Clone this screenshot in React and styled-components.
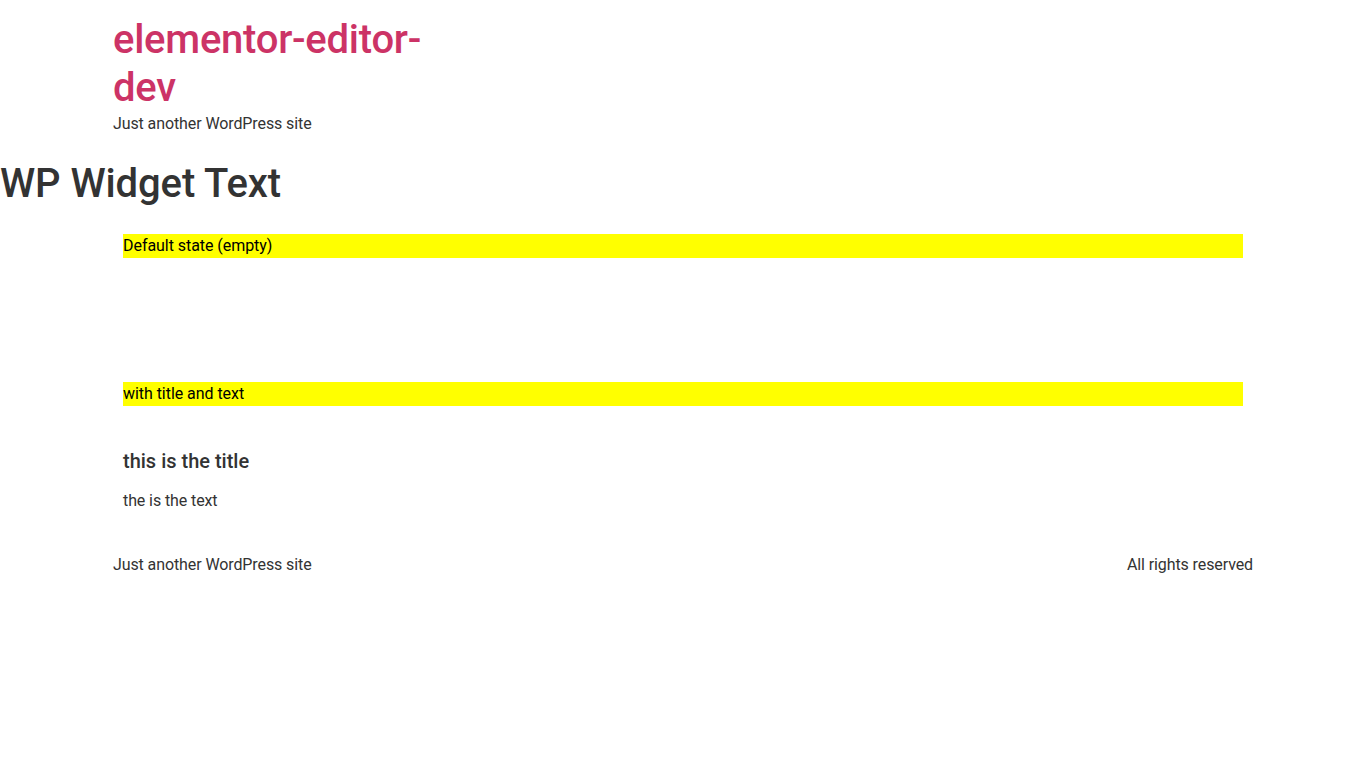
import React from 'react';
import styled, { createGlobalStyle } from 'styled-components';

const GlobalStyle = createGlobalStyle`
    html, body {
        margin: 0;
        padding: 0;
        background: #fff;
    }

    body {
        font-family: Roboto, "Liberation Sans", sans-serif;
        font-size: 16px;
        line-height: 1.5;
        letter-spacing: -0.1px;
        color: #333;
    }
`;

const App = () => {
    return (
        <>
            <GlobalStyle />
            <Header>
                <Branding>
                    <SiteTitle href="#">elementor-editor-dev</SiteTitle>
                    <Tagline>Just another WordPress site</Tagline>
                </Branding>
            </Header>

            <PageTitle>WP Widget Text</PageTitle>

            <Content>
                <Section>
                    <Label>Default state (empty)</Label>
                </Section>

                <Section spaced>
                    <Label>with title and text</Label>
                    <WidgetTitle>this is the title</WidgetTitle>
                    <WidgetText>the is the text</WidgetText>
                </Section>
            </Content>

            <Footer>
                <span>Just another WordPress site</span>
                <span>All rights reserved</span>
            </Footer>
        </>
    );
};

export default App;

const Header = styled.header`
    width: 1140px;
    margin: 0 auto;
    padding: 16px 0;
    display: flex;
`;

const Branding = styled.div`
    display: flex;
    flex-direction: column;
    max-width: 342px;
`;

const SiteTitle = styled.a`
    font-size: 40px;
    font-weight: 500;
    line-height: 1.2;
    letter-spacing: -0.25px;
    color: #c36;
    text-decoration: none;
`;

const Tagline = styled.p`
    margin: 0;
`;

const PageTitle = styled.h1`
    margin: 8px 0 0;
    font-size: 40px;
    font-weight: 500;
    line-height: 1.2;
    letter-spacing: -0.1px;
    color: #333;
`;

const Content = styled.main`
    width: 1120px;
    margin: 26px auto 0;
    display: flex;
    flex-direction: column;
`;

const Section = styled.section`
    display: flex;
    flex-direction: column;
    margin-top: ${ ({ spaced }) => spaced ? '124px' : '0' };
`;

const Label = styled.div`
    background: #ff0;
    color: #000;
    letter-spacing: -0.05px;
`;

const WidgetTitle = styled.h5`
    margin: 43px 0 0;
    font-size: 20px;
    font-weight: 500;
    line-height: 1.2;
    letter-spacing: 0;
    color: #333;
`;

const WidgetText = styled.p`
    margin: 16px 0 0;
`;

const Footer = styled.footer`
    width: 1140px;
    margin: 40px auto 0;
    display: flex;
    justify-content: space-between;
`;
